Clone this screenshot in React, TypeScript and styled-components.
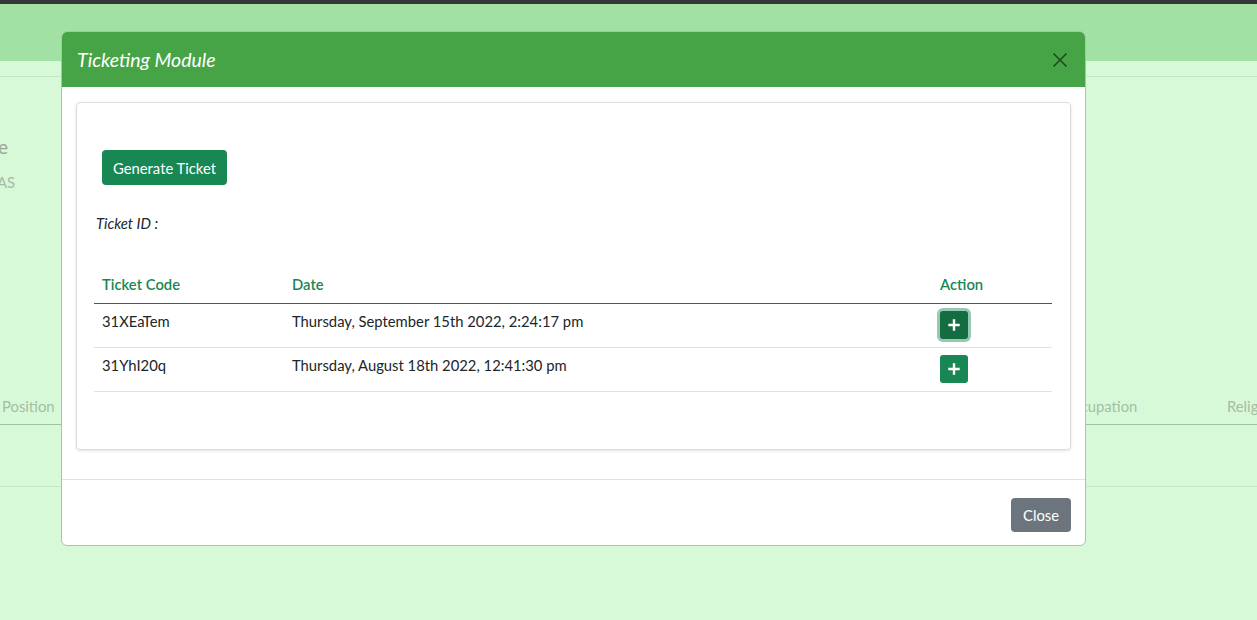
import styled, { createGlobalStyle } from 'styled-components'

const GlobalStyle = createGlobalStyle`
  html, body {
    margin: 0;
    padding: 0;
    height: 100%;
  }
  body {
    font-family: Lato, 'Noto Sans', sans-serif;
    font-size: 14.8px;
    color: #212529;
    background: #d8f9d8;
    overflow: hidden;
  }
  #root {
    height: 100%;
  }
`

type Ticket = {
  code: string
  date: string
  focused?: boolean
}

const TICKETS: Ticket[] = [
  { code: '31XEaTem', date: 'Thursday, September 15th 2022, 2:24:17 pm', focused: true },
  { code: '31YhI20q', date: 'Thursday, August 18th 2022, 12:41:30 pm' },
]

const PlusIcon = () => (
  <svg width='12' height='12' viewBox='0 0 12 12'>
    <path d='M6 1.5v9M1.5 6h9' stroke='#fff' strokeWidth='2.4' strokeLinecap='square' />
  </svg>
)

const CloseIcon = () => (
  <svg width='16' height='16' viewBox='0 0 16 16'>
    <path d='M1.5 1.5l13 13M14.5 1.5l-13 13' stroke='#1f4a22' strokeWidth='1.6' />
  </svg>
)

export default function App() {
  return (
    <Page>
      <GlobalStyle />
      <TopStrip />
      <NavBar />
      <SubBar />
      <Content>
        <Profile>
          <ProfileName>Name</ProfileName>
          <ProfileMeta>SAS</ProfileMeta>
        </Profile>
        <BgTableHead>
          <BgHeadCell $w={70}>Position</BgHeadCell>
          <BgHeadCell $w={990}></BgHeadCell>
          <BgHeadCell $w={165}>Occupation</BgHeadCell>
          <BgHeadCell $w={80}>Religion</BgHeadCell>
        </BgTableHead>
        <BgTableRow />
      </Content>

      <Modal>
        <ModalHeader>
          <ModalTitle>Ticketing Module</ModalTitle>
          <CloseButton aria-label='Close'>
            <CloseIcon />
          </CloseButton>
        </ModalHeader>
        <ModalBody>
          <Card>
            <GenerateButton>Generate Ticket</GenerateButton>
            <TicketId>Ticket ID :</TicketId>
            <Table>
              <colgroup>
                <col style={{ width: 190 }} />
                <col style={{ width: 648 }} />
                <col style={{ width: 120 }} />
              </colgroup>
              <thead>
                <tr>
                  <Th>Ticket Code</Th>
                  <Th>Date</Th>
                  <Th>Action</Th>
                </tr>
              </thead>
              <tbody>
                {TICKETS.map((t) => (
                  <tr key={t.code}>
                    <Td>{t.code}</Td>
                    <Td>{t.date}</Td>
                    <Td>
                      <AddButton $focused={t.focused}>
                        <PlusIcon />
                      </AddButton>
                    </Td>
                  </tr>
                ))}
              </tbody>
            </Table>
          </Card>
        </ModalBody>
        <ModalFooter>
          <SecondaryButton>Close</SecondaryButton>
        </ModalFooter>
      </Modal>
    </Page>
  )
}

const Page = styled.div`
  position: relative;
  height: 100%;
  display: flex;
  flex-direction: column;
`

const TopStrip = styled.div`
  height: 4px;
  background: #35363a;
`

const NavBar = styled.div`
  height: 57px;
  background: #a1e1a4;
`

const SubBar = styled.div`
  height: 15px;
  background: #d6f9d6;
  border-bottom: 1px solid #c4e6c4;
`

const Content = styled.div`
  flex: 1;
  display: flex;
  flex-direction: column;
`

const Profile = styled.div`
  width: 16px;
  padding-top: 58px;
  display: flex;
  flex-direction: column;
  align-items: flex-end;
  gap: 15px;
  white-space: nowrap;
`

const ProfileName = styled.div`
  margin-right: 8px;
  font-size: 19px;
  color: #98a698;
`

const ProfileMeta = styled.div`
  margin-right: 1px;
  font-size: 14.8px;
  color: #a8b8a8;
`

const BgTableHead = styled.div`
  margin-top: 196px;
  display: flex;
  height: 37px;
  align-items: center;
  border-bottom: 1px solid #9cc69c;
  padding-left: 2px;
`

const BgHeadCell = styled.div<{ $w: number }>`
  flex: 0 0 ${(p) => p.$w}px;
  color: #a3bea3;
  font-size: 14.8px;
  white-space: nowrap;
`

const BgTableRow = styled.div`
  height: 61px;
  border-bottom: 1px solid #c6e6c6;
`

const Modal = styled.div`
  position: absolute;
  left: 61px;
  top: 31px;
  width: 1025px;
  box-sizing: border-box;
  background: #fff;
  border: 1px solid #a3c9a3;
  border-radius: 6px;
  overflow: hidden;
  display: flex;
  flex-direction: column;
`

const ModalHeader = styled.div`
  height: 55px;
  background: #46a447;
  display: flex;
  align-items: center;
  justify-content: space-between;
  padding: 0 17px 0 15px;
`

const ModalTitle = styled.h5`
  margin: 0;
  font-size: 19.5px;
  font-weight: 400;
  font-style: italic;
  color: #fff;
`

const CloseButton = styled.button`
  border: 0;
  background: transparent;
  padding: 0;
  width: 16px;
  height: 16px;
  display: flex;
  cursor: pointer;
`

const ModalBody = styled.div`
  padding: 15px 14px 29px;
  border-bottom: 1px solid #dee2e6;
`

const Card = styled.div`
  border: 1px solid #dcdcdc;
  border-radius: 4px;
  box-shadow: 0 1px 3px rgba(0, 0, 0, 0.12);
  padding: 47px 17px 57px;
  display: flex;
  flex-direction: column;
  align-items: flex-start;
`

const GenerateButton = styled.button`
  margin-left: 8px;
  height: 35px;
  padding: 0 11px;
  border: 0;
  border-radius: 4px;
  background: #198754;
  color: #fff;
  font-family: inherit;
  font-size: 14.8px;
  cursor: pointer;
`

const TicketId = styled.div`
  margin: 28px 0 0 2px;
  font-style: italic;
  line-height: 21px;
`

const Table = styled.table`
  margin-top: 32px;
  width: 958px;
  border-collapse: collapse;
  table-layout: fixed;

  tbody tr {
    border-bottom: 1px solid #dee2e6;
  }
`

const Th = styled.th`
  text-align: left;
  font-weight: 600;
  color: #198754;
  padding: 8px 8px;
  line-height: 21px;
  border-bottom: 1px solid #2a6d4b;
`

const Td = styled.td`
  vertical-align: top;
  padding: 7px 8px 8px;
  line-height: 21px;
  height: 28px;
`

const AddButton = styled.button<{ $focused?: boolean }>`
  width: 28px;
  height: 28px;
  border: 0;
  border-radius: 3px;
  padding: 0;
  display: flex;
  align-items: center;
  justify-content: center;
  cursor: pointer;
  background: ${(p) => (p.$focused ? '#146c43' : '#198754')};
  box-shadow: ${(p) => (p.$focused ? '0 0 0 3px rgba(25, 135, 84, 0.45)' : 'none')};
`

const ModalFooter = styled.div`
  height: 65px;
  box-sizing: border-box;
  display: flex;
  align-items: flex-start;
  justify-content: flex-end;
  padding: 18px 14px 0;
`

const SecondaryButton = styled.button`
  height: 34px;
  padding: 0 12px;
  border: 0;
  border-radius: 4px;
  background: #6c757d;
  color: #fff;
  font-family: inherit;
  font-size: 14.8px;
  cursor: pointer;
`
